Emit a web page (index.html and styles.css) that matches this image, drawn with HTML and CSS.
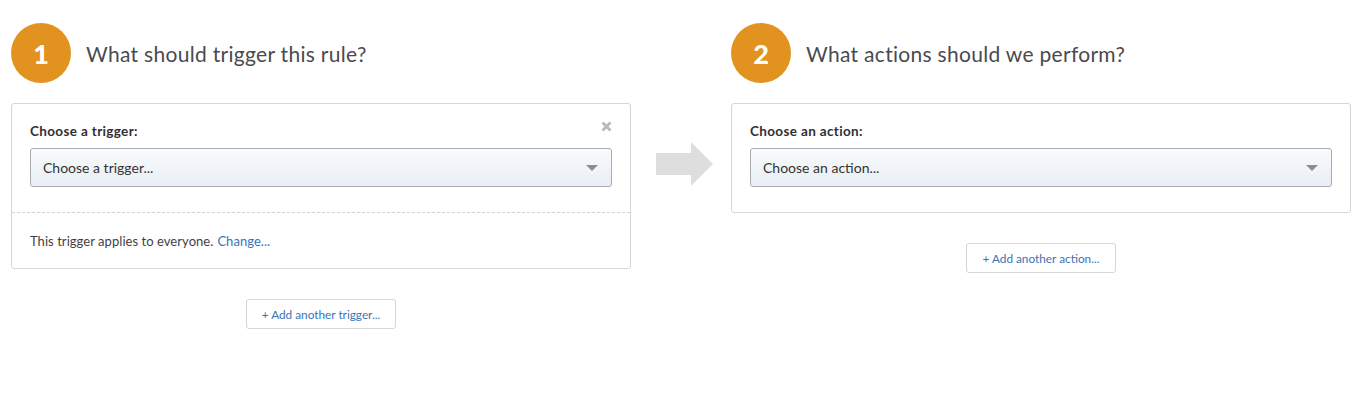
FILE: index.html
```html
<!DOCTYPE html>
<html>
<head>
<meta charset="utf-8">
<link rel="stylesheet" href="styles.css">
</head>
<body>
<div class="page">
  <section class="step">
    <header class="step-head">
      <div class="step-num">1</div>
      <h2 class="step-title">What should trigger this rule?</h2>
    </header>
    <div class="card">
      <div class="card-body">
        <button class="close" aria-label="Remove">
          <svg width="11" height="11" viewBox="0 0 11 11"><path d="M1.5 1.5 L9.5 9.5 M9.5 1.5 L1.5 9.5" stroke="#b9b9b9" stroke-width="2.8" stroke-linecap="butt"/></svg>
        </button>
        <label class="field-label">Choose a trigger:</label>
        <div class="select">
          <span>Choose a trigger...</span>
          <span class="caret"></span>
        </div>
      </div>
      <div class="card-foot">
        This trigger applies to everyone. <a class="link" href="#">Change...</a>
      </div>
    </div>
    <div class="add-row"><button class="add-btn">+ Add another trigger...</button></div>
  </section>

  <div class="arrow-col">
    <div class="arrow"><span class="shaft"></span><span class="head"></span></div>
  </div>

  <section class="step">
    <header class="step-head">
      <div class="step-num">2</div>
      <h2 class="step-title">What actions should we perform?</h2>
    </header>
    <div class="card">
      <div class="card-body body-last">
        <label class="field-label">Choose an action:</label>
        <div class="select">
          <span>Choose an action...</span>
          <span class="caret"></span>
        </div>
      </div>
    </div>
    <div class="add-row"><button class="add-btn">+ Add another action...</button></div>
  </section>
</div>
</body>
</html>
```

FILE: styles.css
```css
* { box-sizing: border-box; }
html, body { margin: 0; padding: 0; background: #fff; }
body {
  font-family: "Lato", "Open Sans", "Liberation Sans", sans-serif;
  color: #333;
}
.page {
  display: flex;
  padding: 23px 0 0 11px;
}
.step {
  width: 620px;
  display: flex;
  flex-direction: column;
}
.step-head {
  display: flex;
  align-items: center;
  height: 60px;
  margin-bottom: 20px;
}
.step-num {
  width: 60px;
  height: 60px;
  border-radius: 50%;
  background: #e2931f;
  color: #fff;
  font-weight: 900;
  font-size: 27px;
  display: flex;
  align-items: center;
  justify-content: center;
  flex: none;
}
.step-title {
  margin: 0 0 0 15px;
  font-weight: 400;
  font-size: 21px;
  color: #4a4a4f;
  letter-spacing: 0.3px;
}
.card {
  border: 1px solid #d6d6d6;
  border-radius: 3px;
  background: #fff;
}
.card-body {
  position: relative;
  padding: 19px 18px 25px;
  display: flex;
  flex-direction: column;
}
.close {
  position: absolute;
  top: 17px;
  right: 18px;
  border: 0;
  background: none;
  padding: 0;
  width: 11px;
  height: 11px;
  display: block;
}
.close svg { display: block; }
.field-label {
  font-size: 13.5px;
  font-weight: 700;
  line-height: 16px;
  color: #2f2f33;
  letter-spacing: 0.35px;
  margin-bottom: 9px;
}
.select {
  height: 39px;
  border: 1px solid #a9adb3;
  border-radius: 3px;
  background: linear-gradient(#f9fbfc, #e8eef4);
  display: flex;
  align-items: center;
  justify-content: space-between;
  padding: 0 13px 0 12px;
  font-size: 14px;
  color: #333;
}
.caret {
  width: 0;
  height: 0;
  border-left: 6px solid transparent;
  border-right: 6px solid transparent;
  border-top: 6px solid #8c8c90;
}
.card-foot {
  border-top: 1px dashed #d4d4d4;
  padding: 0 18px;
  height: 56px;
  display: flex;
  align-items: center;
  font-size: 13px;
  letter-spacing: 0.05px;
  color: #3f3f44;
}
.card-foot .link { margin-left: 4px; }
.link {
  color: #3b73b5;
  text-decoration: none;
}
.add-row {
  display: flex;
  justify-content: center;
  margin-top: 30px;
}
.add-btn {
  width: 150px;
  height: 30px;
  border: 1px solid #d6d6d6;
  border-radius: 3px;
  background: #fff;
  color: #3b73b5;
  font-family: inherit;
  font-size: 11.8px;
  padding: 0;
}
.arrow-col {
  width: 100px;
  flex: none;
  display: flex;
  justify-content: center;
  padding-top: 119px;
}
.arrow {
  display: flex;
  align-items: center;
  height: 44px;
  margin-left: 6px;
}
.shaft {
  width: 35px;
  height: 22px;
  background: #dedede;
}
.head {
  width: 0;
  height: 0;
  border-top: 22px solid transparent;
  border-bottom: 22px solid transparent;
  border-left: 22px solid #dedede;
}
```
